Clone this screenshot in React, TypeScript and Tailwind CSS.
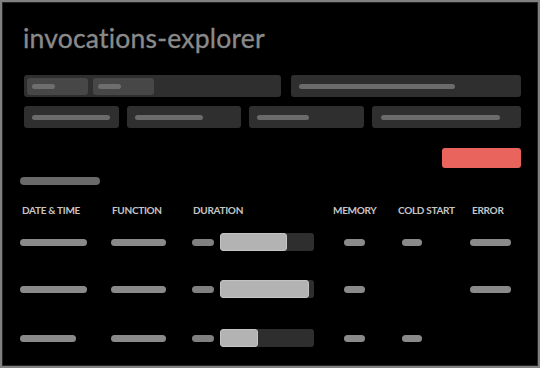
import React from "react";

const Pill = ({ w, h = 7, c = "bg-[#8a8a8a]", cls = "" }: { w: number; h?: number; c?: string; cls?: string }) => (
  <div className={`rounded-full ${c} ${cls}`} style={{ width: w, height: h }} />
);

const rows = [
  { date: 67, fill: 67, cold: true, error: true },
  { date: 67, fill: 89, cold: false, error: true },
  { date: 56, fill: 38, cold: true, error: false },
];

export default function App() {
  return (
    <div
      className="w-[540px] h-[368px] bg-black border-2 border-[#808080] shadow-[inset_0_0_0_1px_#262626] overflow-hidden flex flex-col pl-[18px] pr-[17px]"
      style={{ fontFamily: "Lato, 'Open Sans', sans-serif" }}
    >
      <div className="mt-[20px] ml-[3px] h-[31px] leading-[32px] text-[26.5px] text-[#8a8a8a] tracking-[0.2px] [-webkit-text-stroke:0.35px_#8a8a8a]">
        invocations-explorer
      </div>

      <div className="ml-[4px] mt-[22px] flex gap-[10px]">
        <div className="w-[257px] h-[22px] rounded-[3px] bg-[#2f2f2f] flex items-center gap-[5px] px-[3px]">
          <div className="w-[61px] h-[17px] rounded-[3px] bg-[#474747] flex items-center pl-[5px]">
            <Pill w={23} h={5} c="bg-[#6e6e6e]" />
          </div>
          <div className="w-[61px] h-[17px] rounded-[3px] bg-[#474747] flex items-center pl-[5px]">
            <Pill w={23} h={5} c="bg-[#6e6e6e]" />
          </div>
        </div>
        <div className="flex-1 h-[22px] rounded-[3px] bg-[#2f2f2f] flex items-center pl-[8px]">
          <Pill w={156} h={5} c="bg-[#6b6b6b]" />
        </div>
      </div>

      <div className="ml-[4px] mt-[9px] flex gap-[8px]">
        <div className="w-[95px] h-[22px] rounded-[3px] bg-[#2f2f2f] flex items-center pl-[8px]">
          <Pill w={78} h={5} c="bg-[#6b6b6b]" />
        </div>
        <div className="w-[114px] h-[22px] rounded-[3px] bg-[#2f2f2f] flex items-center pl-[8px]">
          <Pill w={68} h={5} c="bg-[#6b6b6b]" />
        </div>
        <div className="w-[115px] h-[22px] rounded-[3px] bg-[#2f2f2f] flex items-center pl-[8px]">
          <Pill w={52} h={5} c="bg-[#6b6b6b]" />
        </div>
        <div className="flex-1 h-[22px] rounded-[3px] bg-[#2f2f2f] flex items-center pl-[9px]">
          <Pill w={119} h={5} c="bg-[#6b6b6b]" />
        </div>
      </div>

      <div className="mt-[20px] flex justify-end">
        <div className="w-[79px] h-[20px] rounded-[3px] bg-[#e8645c]" />
      </div>

      <div className="mt-[9px]">
        <Pill w={80} h={8} c="bg-[#6a6a6a]" />
      </div>

      <div className="mt-[19px] grid grid-cols-[91px_81px_141px_65px_72px_1fr] items-center text-[10px] leading-[12px] font-bold text-[#c6c6c6] tracking-[-0.3px]">
        <div className="ml-[2px]">DATE &amp; TIME</div>
        <div className="ml-[1px]">FUNCTION</div>
        <div className="ml-[1px]">DURATION</div>
        <div>MEMORY</div>
        <div>COLD START</div>
        <div className="ml-[2px]">ERROR</div>
      </div>

      <div className="flex flex-col">
        {rows.map((r, i) => (
          <div
            key={i}
            className={`grid grid-cols-[91px_81px_141px_65px_72px_1fr] items-center h-[18px] ${
              i === 0 ? "mt-[17px]" : i === 1 ? "mt-[29px]" : "mt-[31px]"
            }`}
          >
            <div>
              <Pill w={r.date} />
            </div>
            <div>
              <Pill w={55} />
            </div>
            <div className="flex items-center gap-[6px]">
              <Pill w={22} c="bg-[#808080]" />
              <div className="w-[94px] h-[18px] rounded-[3px] bg-[#2e2e2e] overflow-hidden">
                <div
                  className="h-full rounded-[3px] bg-[#b3b3b3] border border-[#c4c4c4]"
                  style={{ width: r.fill }}
                />
              </div>
            </div>
            <div className="pl-[11px]">
              <Pill w={21} />
            </div>
            <div className="pl-[4px]">{r.cold && <Pill w={20} />}</div>
            <div>{r.error && <Pill w={41} />}</div>
          </div>
        ))}
      </div>
    </div>
  );
}
